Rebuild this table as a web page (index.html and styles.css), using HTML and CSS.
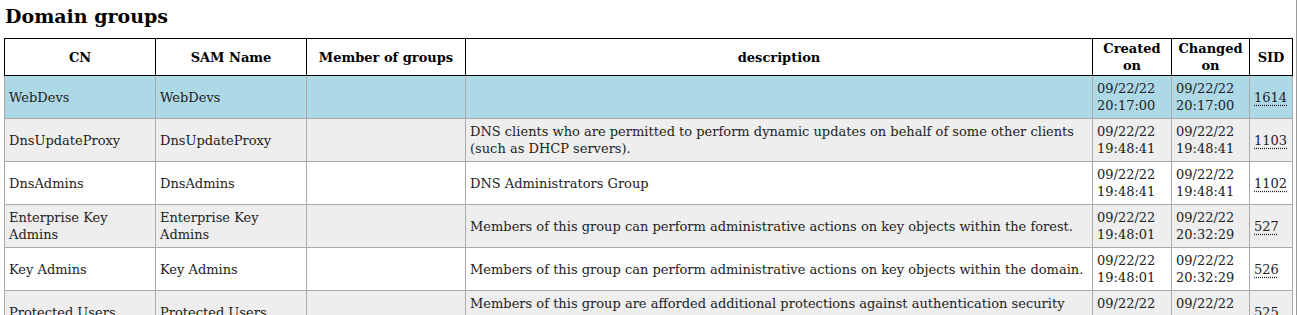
FILE: index.html
```html
<!DOCTYPE html>
<html>
<head>
<meta charset="utf-8">
<link rel="stylesheet" href="styles.css">
</head>
<body>
<div class="page">
<h2 class="title">Domain groups</h2>
<table class="grid">
<colgroup>
<col class="c-cn"><col class="c-sam"><col class="c-mem"><col class="c-desc"><col class="c-cr"><col class="c-ch"><col class="c-sid">
</colgroup>
<thead>
<tr><th>CN</th><th>SAM Name</th><th>Member of groups</th><th>description</th><th>Created on</th><th>Changed on</th><th>SID</th></tr>
</thead>
<tbody>
<tr class="hl"><td>WebDevs</td><td>WebDevs</td><td></td><td></td><td>09/22/22 20:17:00</td><td>09/22/22 20:17:00</td><td><abbr class="sid">1614</abbr></td></tr>
<tr class="alt"><td>DnsUpdateProxy</td><td>DnsUpdateProxy</td><td></td><td>DNS clients who are permitted to perform dynamic updates on behalf of some other clients (such as DHCP servers).</td><td>09/22/22 19:48:41</td><td>09/22/22 19:48:41</td><td><abbr class="sid">1103</abbr></td></tr>
<tr><td>DnsAdmins</td><td>DnsAdmins</td><td></td><td>DNS Administrators Group</td><td>09/22/22 19:48:41</td><td>09/22/22 19:48:41</td><td><abbr class="sid">1102</abbr></td></tr>
<tr class="alt"><td>Enterprise Key Admins</td><td>Enterprise Key Admins</td><td></td><td>Members of this group can perform administrative actions on key objects within the forest.</td><td>09/22/22 19:48:01</td><td>09/22/22 20:32:29</td><td><abbr class="sid">527</abbr></td></tr>
<tr><td>Key Admins</td><td>Key Admins</td><td></td><td>Members of this group can perform administrative actions on key objects within the domain.</td><td>09/22/22 19:48:01</td><td>09/22/22 20:32:29</td><td><abbr class="sid">526</abbr></td></tr>
<tr class="alt"><td>Protected Users</td><td>Protected Users</td><td></td><td>Members of this group are afforded additional protections against authentication security threats. See http://go.microsoft.com/fwlink/?LinkId=298939 for more information.</td><td>09/22/22 19:48:01</td><td>09/22/22 19:48:01</td><td><abbr class="sid">525</abbr></td></tr>
</tbody>
</table>
</div>
</body>
</html>
```
FILE: styles.css
```css
html, body {
  margin: 0;
  padding: 0;
  background: #fff;
}
body {
  font-family: "DejaVu Serif", serif;
  color: #000;
  overflow: hidden;
}
.page {
  padding: 4px 4px 0 4px;
  width: 1288px;
  border-right: 2px solid #999;
  min-height: 311px;
}
.title {
  font-size: 19px;
  font-weight: bold;
  margin: 1px 0 10px 1px;
  line-height: 23px;
}
.grid {
  border-collapse: collapse;
  width: 1288px;
  table-layout: fixed;
  font-size: 13px;
  line-height: 17px;
}
.c-cn { width: 151px; }
.c-sam { width: 151px; }
.c-mem { width: 159px; }
.c-desc { width: 627px; }
.c-cr { width: 79px; }
.c-ch { width: 78px; }
.c-sid { width: 43px; }
.grid th {
  border: 1px solid #000;
  font-weight: bold;
  text-align: center;
  padding: 1px 4px;
  height: 34px;
  vertical-align: middle;
}
.grid td {
  border: 1px solid #aaa;
  padding: 4px 4px;
  height: 34px;
  vertical-align: middle;
  text-align: left;
  color: #222;
}
.grid tr.hl td { background: #add8e6; }
.grid tr.alt td { background: #eee; }
.sid {
  text-decoration: underline dotted;
  text-underline-offset: 3px;
}
```
